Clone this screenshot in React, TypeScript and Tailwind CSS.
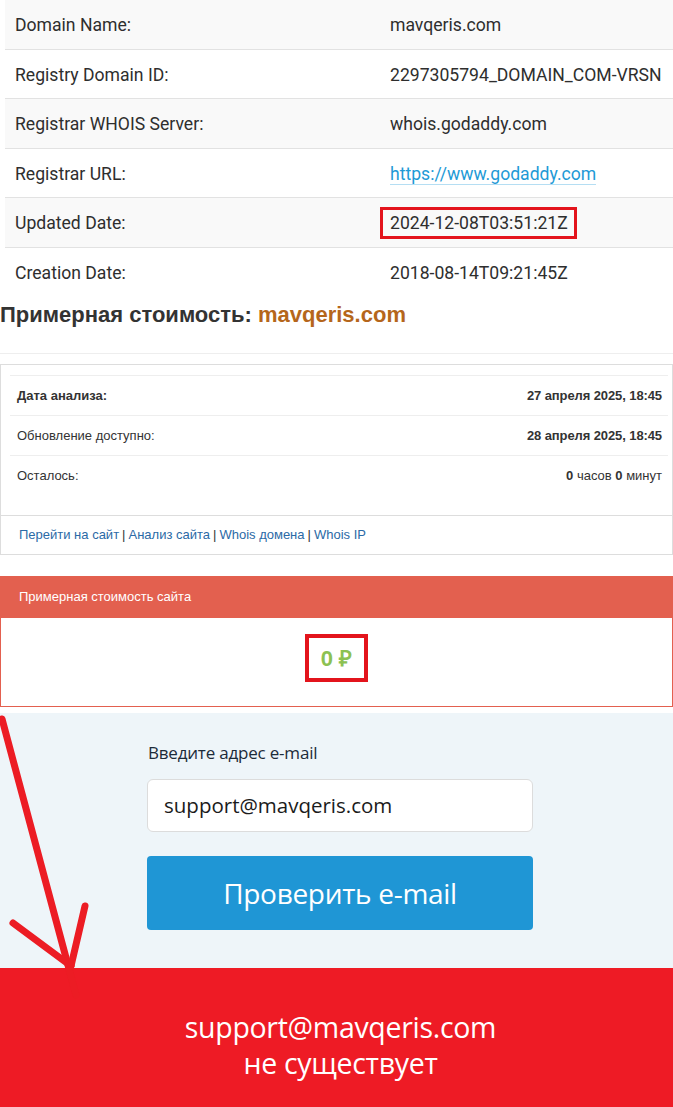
import React from "react";

const rows: { label: string; value: string; kind?: "link" | "boxed" }[] = [
  { label: "Domain Name:", value: "mavqeris.com" },
  { label: "Registry Domain ID:", value: "2297305794_DOMAIN_COM-VRSN" },
  { label: "Registrar WHOIS Server:", value: "whois.godaddy.com" },
  { label: "Registrar URL:", value: "https://www.godaddy.com", kind: "link" },
  { label: "Updated Date:", value: "2024-12-08T03:51:21Z", kind: "boxed" },
  { label: "Creation Date:", value: "2018-08-14T09:21:45Z" },
];

export default function App() {
  return (
    <div className="relative w-[673px] min-h-[1107px] overflow-hidden bg-white">
      {/* WHOIS table */}
      <div className="pl-[5px] font-['Roboto',sans-serif] text-[17.6px] text-[#2e2e2e]">
        {rows.map((r, i) => (
          <div
            key={r.label}
            className={`flex h-[49.5px] items-center ${i % 2 === 0 ? "bg-[#f9f9f9]" : "bg-white"} ${i < rows.length - 1 ? "border-b-[1.5px] border-[#e2e2e2]" : ""}`}
          >
            <div className="w-[385px] pl-[10px] pt-[2px]">{r.label}</div>
            <div className="pt-[2px]">
              {r.kind === "link" ? (
                <span className="border-b border-[#b5def3] text-[#1e9ad6]">{r.value}</span>
              ) : r.kind === "boxed" ? (
                <span className="-ml-[10px] inline-flex h-[32px] items-center border-[3px] border-[#e3141c] pl-[7px] pr-[6px]">
                  {r.value}
                </span>
              ) : (
                r.value
              )}
            </div>
          </div>
        ))}
      </div>

      {/* Title */}
      <h2 className="mt-[5px] h-[25px] font-['Liberation_Sans',Arial,sans-serif] text-[22px] font-bold leading-[25px] text-[#333]">
        Примерная стоимость: <span className="text-[#b5661b]">mavqeris.com</span>
      </h2>

      <div className="mt-[26px] border-t border-[#eeeeee]" />

      {/* Analysis box */}
      <div className="mt-[10px] border border-[#dddddd] font-['Liberation_Sans',Arial,sans-serif] text-[13px] text-[#333]">
        <div className="pl-[9px] pr-[4px] pt-[10px] pb-[20px]">
          <div className="flex h-[40px] items-center justify-between border-t border-[#eeeeee] pl-[7px] pr-[6px]">
            <span className="font-bold">Дата анализа:</span>
            <span className="font-bold tracking-[-0.1px]">27 апреля 2025, 18:45</span>
          </div>
          <div className="flex h-[40px] items-center justify-between border-t border-[#eeeeee] pl-[7px] pr-[6px]">
            <span>Обновление доступно:</span>
            <span className="font-bold tracking-[-0.1px]">28 апреля 2025, 18:45</span>
          </div>
          <div className="flex h-[40px] items-center justify-between border-t border-[#eeeeee] pl-[7px] pr-[6px]">
            <span>Осталось:</span>
            <span>
              <b>0</b> часов <b>0</b> минут
            </span>
          </div>
        </div>
        <div className="flex h-[39px] items-center border-t border-[#dddddd] px-[18px]">
          <span className="text-[#2b6aa6]">Перейти на сайт</span>
          <span className="mx-[3px]">|</span>
          <span className="text-[#2b6aa6]">Анализ сайта</span>
          <span className="mx-[3px]">|</span>
          <span className="text-[#2b6aa6]">Whois домена</span>
          <span className="mx-[3px]">|</span>
          <span className="text-[#2b6aa6]">Whois IP</span>
        </div>
      </div>

      {/* Estimated cost panel */}
      <div className="mt-[21px] font-['Liberation_Sans',Arial,sans-serif]">
        <div className="flex h-[42px] items-center bg-[#e3604f] px-[19px] text-[13px] text-white">
          Примерная стоимость сайта
        </div>
        <div className="flex h-[89px] justify-center border-x border-b border-[#e3604f] pt-[16px]">
          <span className="inline-flex h-[48px] w-[63px] items-center justify-center border-[4px] border-[#e3141c] text-[22px] font-bold text-[#8cc152]">
            0 ₽
          </span>
        </div>
      </div>

      {/* Email form */}
      <div className="mt-[6px] bg-[#eef5f9] pt-[29px] pb-[38px] font-['Open_Sans',sans-serif]">
        <div className="ml-[147px] w-[386px]">
          <div className="h-[22px] pl-[1px] text-[17px] leading-[22px] tracking-[-0.2px] text-[#1c2b39]">
            Введите адрес e-mail
          </div>
          <div className="mt-[15px] flex h-[53px] items-center rounded-[6px] border border-[#dcdcdc] bg-white pl-[16px] text-[20.5px] text-[#1b1b1b]">
            support@mavqeris.com
          </div>
          <div className="mt-[24px] flex h-[74px] items-center justify-center rounded-[4px] bg-[#1f96d5] text-[28px] tracking-[-0.3px] text-white">
            Проверить e-mail
          </div>
        </div>
      </div>

      {/* Result banner */}
      <div className="flex h-[139px] flex-col items-center bg-[#ee1b25] pt-[41px] pl-[8px] font-['Open_Sans',sans-serif] text-[28.5px] leading-[36px] tracking-[-0.3px] text-white">
        <div>support@mavqeris.com</div>
        <div>не существует</div>
      </div>

      {/* Annotation arrow */}
      <svg
        className="pointer-events-none absolute left-0 top-0"
        width="673"
        height="1107"
        viewBox="0 0 673 1107"
      >
        <g stroke="#ec1c24" strokeWidth="7" strokeLinecap="round" fill="none">
          <line x1="2" y1="719" x2="76" y2="995" />
          <line x1="13" y1="923" x2="71" y2="966" />
          <line x1="85" y1="906" x2="71" y2="966" />
        </g>
      </svg>
    </div>
  );
}
